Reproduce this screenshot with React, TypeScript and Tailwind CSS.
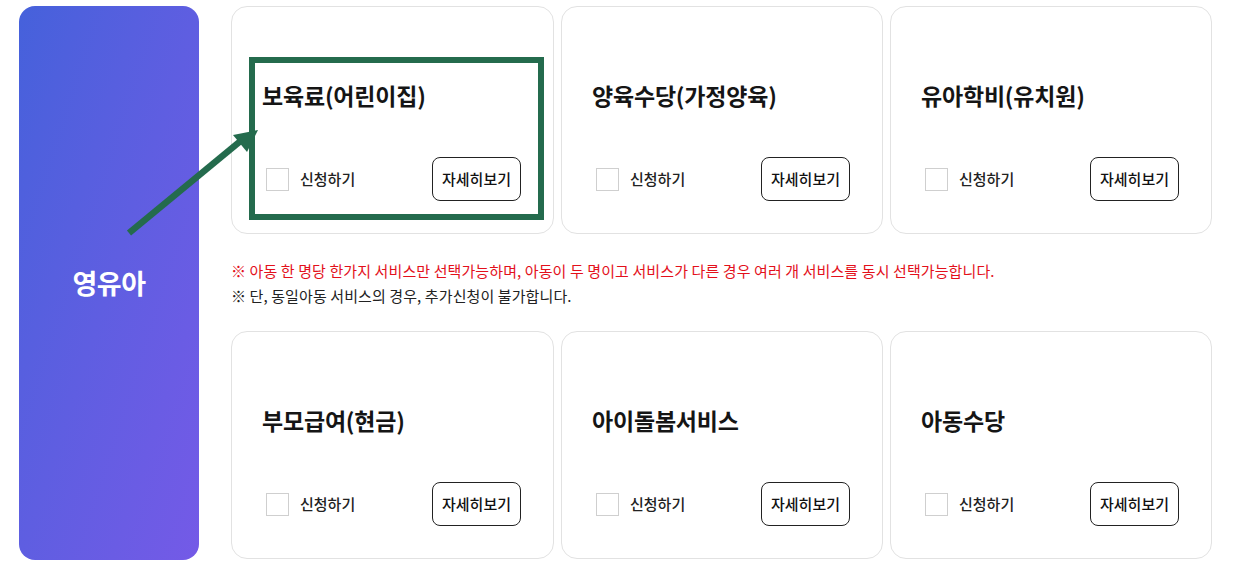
import React from "react";

const services = [
  ["보육료(어린이집)", "양육수당(가정양육)", "유아학비(유치원)"],
  ["부모급여(현금)", "아이돌봄서비스", "아동수당"],
];

function ServiceCard({ title }: { title: string }) {
  return (
    <div className="h-[228px] rounded-[16px] border border-[#e2e2e2] bg-white flex flex-col pt-[72px] pl-[30px] pr-[32px] pb-[32px]">
      <h3 className="text-[23px] leading-[32px] font-bold text-[#151515] tracking-[-0.2px]">{title}</h3>
      <div className="mt-auto flex items-center justify-between">
        <label className="flex items-center gap-[11px] ml-[4px]">
          <span className="w-[23px] h-[23px] border border-[#cfcfcf] bg-white" />
          <span className="text-[15px] font-medium text-[#222]">신청하기</span>
        </label>
        <button className="w-[89px] h-[44px] rounded-[8px] border border-[#222] text-[15px] font-medium text-[#111]">
          자세히보기
        </button>
      </div>
    </div>
  );
}

export default function App() {
  return (
    <div
      className="relative w-[1251px] h-[567px] bg-white pl-[19px] pt-[6px] flex gap-[32px]"
      style={{ fontFamily: '"Noto Sans CJK KR", "Noto Sans", sans-serif' }}
    >
      {/* Category */}
      <div className="w-[180px] h-[554px] rounded-[16px] bg-gradient-to-br from-[#4561db] to-[#745ae7] flex items-center justify-center">
        <span className="text-white text-[27px] font-bold tracking-[-0.5px]">영유아</span>
      </div>

      {/* Services */}
      <div className="w-[981px] flex flex-col">
        <div className="grid grid-cols-[323px_322px_322px] gap-[7px]">
          {services[0].map((t) => (
            <ServiceCard key={t} title={t} />
          ))}
        </div>

        <div className="mt-[24px] mb-[23px] text-[15px] leading-[25px] tracking-[0.1px]">
          <p className="text-[#e3101b]">
            ※ 아동 한 명당 한가지 서비스만 선택가능하며, 아동이 두 명이고 서비스가 다른 경우 여러 개 서비스를 동시 선택가능합니다.
          </p>
          <p className="text-[#222]">※ 단, 동일아동 서비스의 경우, 추가신청이 불가합니다.</p>
        </div>

        <div className="grid grid-cols-[323px_322px_322px] gap-[7px]">
          {services[1].map((t) => (
            <ServiceCard key={t} title={t} />
          ))}
        </div>
      </div>

      {/* annotation overlay */}
      <svg className="absolute inset-0 pointer-events-none" width="1251" height="567">
        <rect x="252" y="60" width="289" height="157" fill="none" stroke="#246b4d" strokeWidth="6" />
        <line x1="129" y1="233" x2="243" y2="139" stroke="#246b4d" strokeWidth="6.5" />
        <polygon points="258,130 233,135 247,152" fill="#246b4d" />
      </svg>
    </div>
  );
}
